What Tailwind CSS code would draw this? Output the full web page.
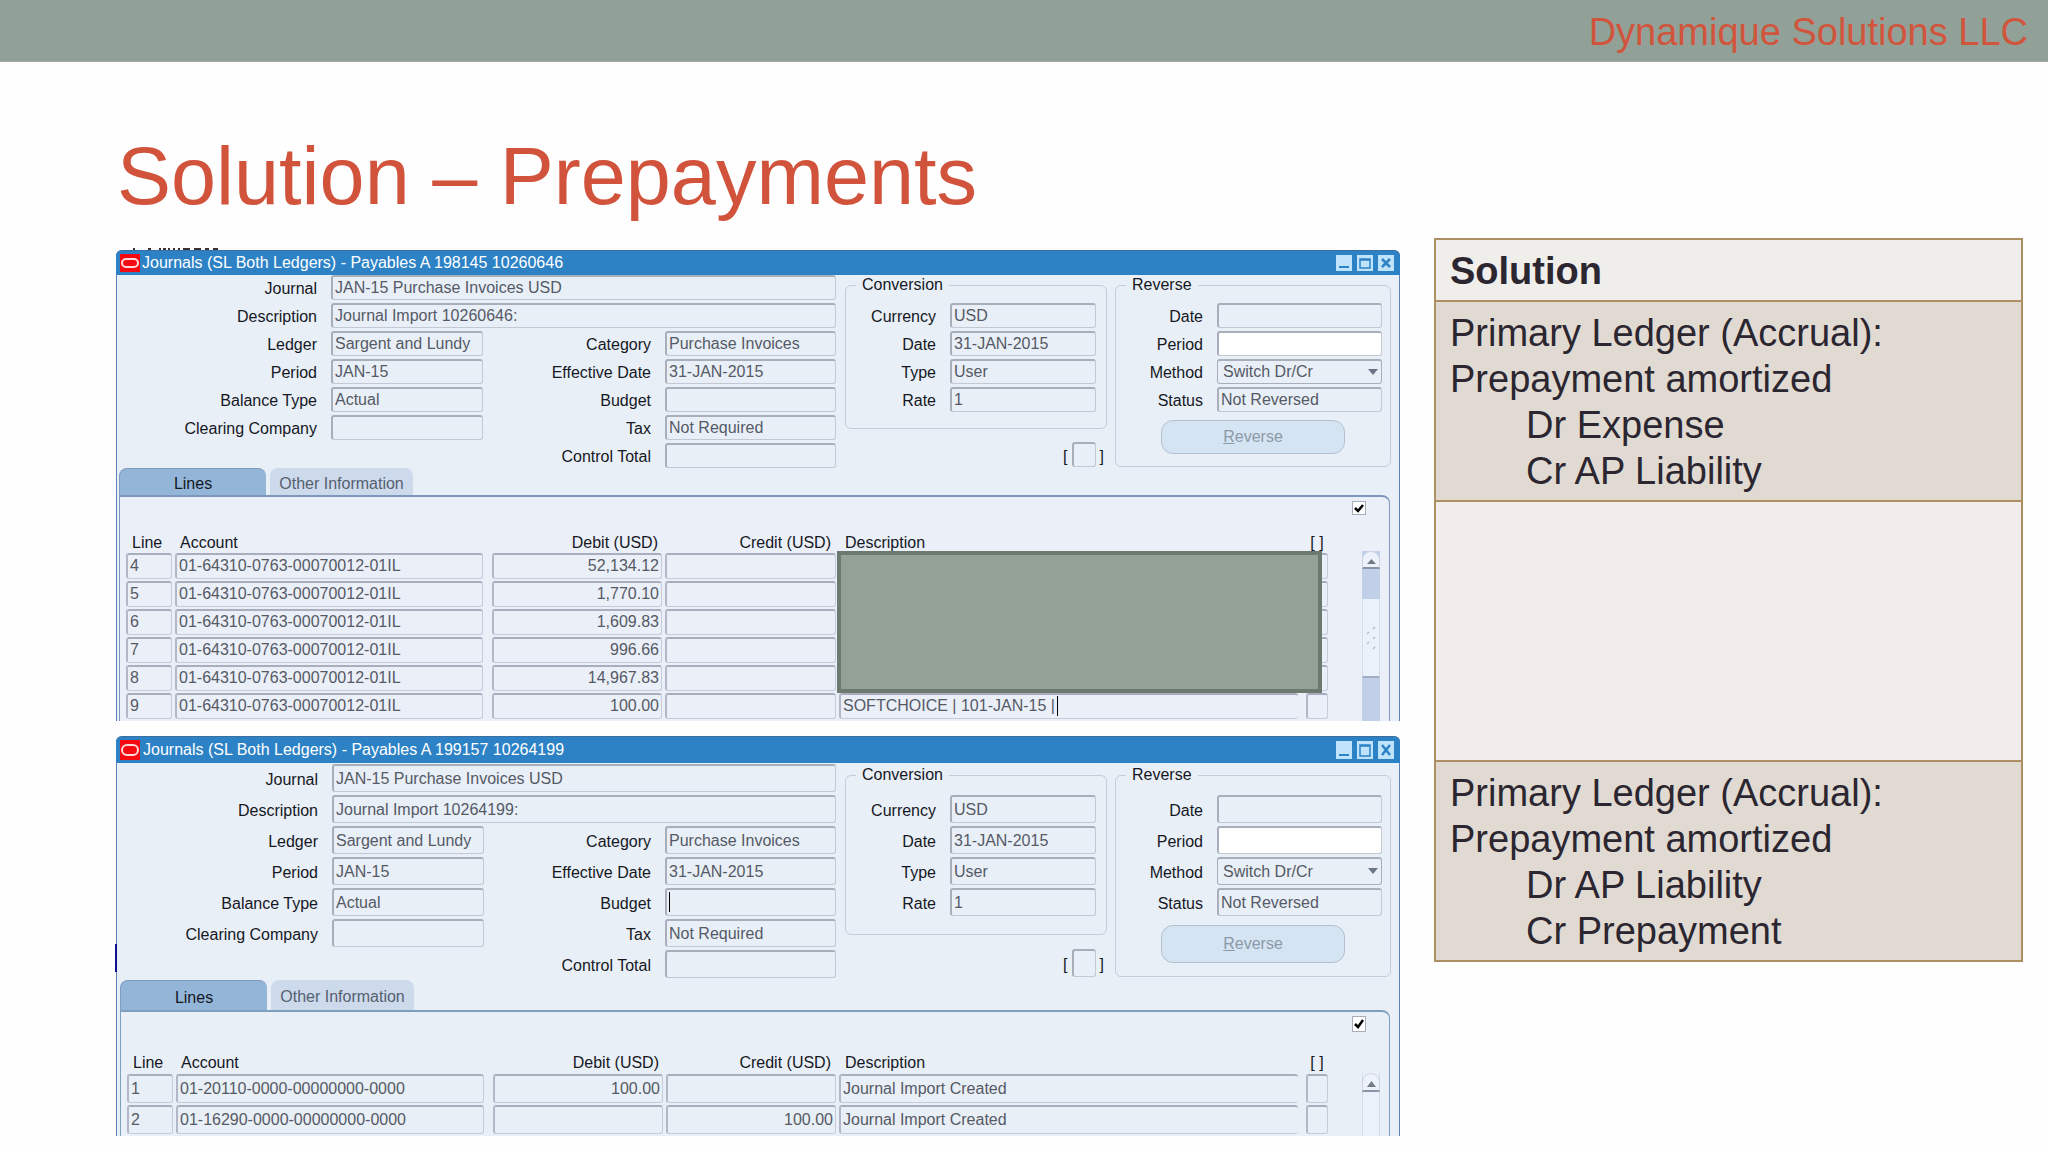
<!DOCTYPE html>
<html lang="en">
<head>
  <meta charset="UTF-8">
  <meta name="viewport" content="width=device-width, initial-scale=1.0">
  <title>Solution – Prepayments</title>
  <script src="https://cdn.jsdelivr.net/npm/@tailwindcss/browser@4"></script>
</head>
<body class="bg-[#fefefe] min-h-screen overflow-x-hidden font-['Liberation_Sans',Arial,sans-serif] text-[#2b2630]">

  <header class="bg-[#91a197] border-b border-[#a3aaa6] h-[62px] flex items-center justify-end pr-5">
    <p class="pt-[2px] text-[38px] leading-none text-[#d1553c]">Dynamique Solutions LLC</p>
  </header>

  <h1 class="pl-[117px] pt-[66px] pb-[14px] text-[81px] leading-[96px] text-[#d1533c]">Solution – Prepayments</h1>

  <main class="grid grid-cols-[1284fr_589fr] gap-[34px] pl-[116px] pr-[25px] items-start">

    <div class="pt-[10px] text-base leading-none">

      <!-- bottom edge of the heading behind the first window -->
      <svg class="block w-full h-[2px]" aria-hidden="true"><path d="M17 1h2M32 1h3M43 1h2M47 1h3M52 1h2M57 1h2M62 1h2M67 1h7M78 1h7M89 1h4M97 1h5" stroke="#333" stroke-width="2"/></svg>

      <!-- Journal 198145 -->
      <section class="bg-[#e9eff7] border-x border-[#5b80b5] rounded-t-md">
        <div class="-mx-px h-[25px] flex items-center gap-[2px] bg-[#2d82c6] border-t border-[#3b6f9f] rounded-t-md pl-1 pr-[6px]">
          <svg class="w-5 h-[18px]" viewBox="0 0 20 18" aria-hidden="true"><rect width="20" height="18" fill="#f50a14"/><rect x="2" y="5" width="16" height="8" rx="4" fill="none" stroke="#ffd9d9" stroke-width="2"/></svg>
          <h2 class="flex-1 text-white">Journals (SL Both Ledgers) - Payables A 198145 10260646</h2>
          <div class="flex gap-[5px]">
            <button aria-label="Minimize"><svg class="block w-4 h-4" viewBox="0 0 16 16"><rect width="16" height="16" fill="#bfe3fa"/><path d="M3 12h10" stroke="#2d82c6" stroke-width="2"/></svg></button>
            <button aria-label="Maximize"><svg class="block w-4 h-4" viewBox="0 0 16 16"><rect width="16" height="16" fill="#bfe3fa"/><path d="M3 4h10v9H3zM3 5h10" fill="none" stroke="#2d82c6" stroke-width="1.5"/></svg></button>
            <button aria-label="Close"><svg class="block w-4 h-4" viewBox="0 0 16 16"><rect width="16" height="16" fill="#bfe3fa"/><path d="M4 4l8 8M12 4l-8 8" stroke="#2d82c6" stroke-width="2.5"/></svg></button>
          </div>
        </div>

        <form class="flex items-start text-[#15181f] [&_label]:pt-[3px] [&_label]:text-right [&_input]:w-full [&_input]:min-w-0 [&_input]:h-full [&_input]:pl-[2px] [&_input]:text-[#555a66] [&_input]:border [&_input]:border-t-2 [&_input]:border-l-2 [&_input]:border-[#c3c8d4] [&_input]:border-t-[#a9aebb] [&_input]:border-l-[#a9aebb] [&_input]:rounded-[3px]">
          <div class="flex-1 grid grid-cols-[200px_152px_1fr_171px] gap-x-[14px] auto-rows-[25px] gap-y-[3px] items-center">
            <label for="a-journal">Journal</label>
            <div class="col-span-3 h-full"><input id="a-journal" value="JAN-15 Purchase Invoices USD" readonly></div>
            <label for="a-desc">Description</label>
            <div class="col-span-3 h-full"><input id="a-desc" value="Journal Import 10260646:" readonly></div>
            <label for="a-ledger">Ledger</label><input id="a-ledger" value="Sargent and Lundy" readonly>
            <label for="a-category">Category</label><input id="a-category" value="Purchase Invoices" readonly>
            <label for="a-period">Period</label><input id="a-period" value="JAN-15" readonly>
            <label for="a-effective">Effective Date</label><input id="a-effective" value="31-JAN-2015" readonly>
            <label for="a-balance">Balance Type</label><input id="a-balance" value="Actual" readonly>
            <label for="a-budget">Budget</label><input id="a-budget" readonly>
            <label for="a-clearing">Clearing Company</label><input id="a-clearing" readonly>
            <label for="a-tax">Tax</label><input id="a-tax" value="Not Required" readonly>
            <label for="a-control" class="col-start-3">Control Total</label><input id="a-control" readonly>
          </div>

          <div class="w-[262px] ml-[9px]">
            <fieldset class="border border-[#c6ccd9] rounded-md pb-4">
              <legend class="ml-[10px] px-[6px] h-5 leading-5">Conversion</legend>
              <div class="mt-2 grid grid-cols-[90px_146px] gap-x-[14px] auto-rows-[25px] gap-y-[3px] items-center">
                <label for="a-currency">Currency</label><input id="a-currency" value="USD" readonly>
                <label for="a-cdate">Date</label><input id="a-cdate" value="31-JAN-2015" readonly>
                <label for="a-type">Type</label><input id="a-type" value="User" readonly>
                <label for="a-rate">Rate</label><input id="a-rate" value="1" readonly>
              </div>
            </fieldset>
            <div class="mt-[13px] pr-[3px] h-[25px] flex items-center justify-end gap-1">
              <span class="pt-1">[</span>
              <div class="w-6 h-full"><input aria-label="Journal flexfield" readonly></div>
              <span class="pt-1">]</span>
            </div>
          </div>

          <fieldset class="w-[276px] ml-2 mr-2 border border-[#c6ccd9] rounded-md pb-3">
            <legend class="ml-[10px] px-[6px] h-5 leading-5">Reverse</legend>
            <div class="mt-2 pr-2 grid grid-cols-[87px_1fr] gap-x-[14px] auto-rows-[25px] gap-y-[3px] items-center">
              <label for="a-rdate">Date</label><input id="a-rdate" readonly>
              <label for="a-rperiod">Period</label><input id="a-rperiod" class="bg-white">
              <label for="a-method">Method</label>
              <div class="relative h-full">
                <select id="a-method" class="appearance-none w-full h-full pl-[5px] text-[#555a66] border border-t-2 border-[#a9aebb] rounded-[3px]"><option>Switch Dr/Cr</option></select>
                <svg class="absolute right-1 top-[10px] w-[10px] h-[6px]" viewBox="0 0 10 6" aria-hidden="true"><path d="M0 0h10L5 6z" fill="#6b7688"/></svg>
              </div>
              <label for="a-status">Status</label><input id="a-status" value="Not Reversed" readonly>
            </div>
            <button type="button" class="block mt-2 ml-[45px] w-[184px] h-[34px] rounded-xl border border-[#b3c0d0] bg-[#d5e4f2] text-[#8d99a8]"><u>R</u>everse</button>
          </fieldset>
        </form>

        <nav class="flex gap-1 pl-[2px] h-[27px]">
          <button class="w-[147px] pt-1 bg-[#93b5d7] border-t border-l border-[#7d9cbf] rounded-t-lg text-[#15181f]">Lines</button>
          <button class="w-[143px] pt-1 bg-[#cddaec] rounded-t-lg text-[#555f70]">Other Information</button>
        </nav>
        <div class="ml-[2px] mr-[9px] border-x border-t-2 border-[#7f97bf] rounded-tr-lg bg-[#ebeff8]">
          <div class="h-9 pt-1 pr-[23px] flex justify-end">
            <label class="relative block w-[14px] h-[14px]">
              <input type="checkbox" checked aria-label="Enabled" class="block appearance-none w-full h-full bg-white border border-[#a9aebb]">
              <svg class="absolute inset-0 w-full h-full" viewBox="0 0 14 14" aria-hidden="true"><path d="M3 7l3 3 5-6" fill="none" stroke="#000" stroke-width="2.5"/></svg>
            </label>
          </div>
          <div class="relative flex gap-[34px] pl-[6px] pr-[9px]">
            <table class="flex-1 table-fixed [&_th]:font-normal [&_th]:pt-0 [&_th]:pb-[1px] [&_th]:h-5 [&_th]:text-[#15181f] [&_td]:p-0 [&_td]:pb-[2px] [&_input]:block [&_input]:w-full [&_input]:h-[26px] [&_input]:px-[2px] [&_input]:pb-[2px] [&_input]:text-[#555a66] [&_input]:border [&_input]:border-t-2 [&_input]:border-l-2 [&_input]:border-[#c6cbdc] [&_input]:border-t-[#a9aebf] [&_input]:border-l-[#b3b8c8] [&_input]:rounded-[3px]">
              <thead>
                <tr>
                  <th class="w-[49px] text-left"><span class="pl-[6px]">Line</span></th>
                  <th class="w-[317px] text-left"><span class="pl-[5px]">Account</span></th>
                  <th class="w-[173px] text-right"><span class="pr-[7px]">Debit (USD)</span></th>
                  <th class="w-[174px] text-right"><span class="pr-2">Credit (USD)</span></th>
                  <th class="text-left"><span class="pl-[6px]">Description</span></th>
                  <th class="w-[22px]">[ ]</th>
                </tr>
              </thead>
              <tbody class="[&_td:nth-child(1)]:pr-[3px] [&_td:nth-child(2)]:pr-[9px] [&_td:nth-child(3)]:pr-[3px] [&_td:nth-child(4)]:pr-[3px] [&_td:nth-child(5)]:pr-2 [&_td:nth-child(3)_input]:text-right [&_td:nth-child(4)_input]:text-right [&_td:nth-child(5)_input]:border-r-0">
                <tr><td><input aria-label="Line" value="4"></td><td><input aria-label="Account" value="01-64310-0763-00070012-01IL"></td><td><input aria-label="Debit" value="52,134.12"></td><td><input aria-label="Credit"></td><td><input aria-label="Description"></td><td><input aria-label="Flexfield"></td></tr>
                <tr><td><input aria-label="Line" value="5"></td><td><input aria-label="Account" value="01-64310-0763-00070012-01IL"></td><td><input aria-label="Debit" value="1,770.10"></td><td><input aria-label="Credit"></td><td><input aria-label="Description"></td><td><input aria-label="Flexfield"></td></tr>
                <tr><td><input aria-label="Line" value="6"></td><td><input aria-label="Account" value="01-64310-0763-00070012-01IL"></td><td><input aria-label="Debit" value="1,609.83"></td><td><input aria-label="Credit"></td><td><input aria-label="Description"></td><td><input aria-label="Flexfield"></td></tr>
                <tr><td><input aria-label="Line" value="7"></td><td><input aria-label="Account" value="01-64310-0763-00070012-01IL"></td><td><input aria-label="Debit" value="996.66"></td><td><input aria-label="Credit"></td><td><input aria-label="Description"></td><td><input aria-label="Flexfield"></td></tr>
                <tr><td><input aria-label="Line" value="8"></td><td><input aria-label="Account" value="01-64310-0763-00070012-01IL"></td><td><input aria-label="Debit" value="14,967.83"></td><td><input aria-label="Credit"></td><td><input aria-label="Description"></td><td><input aria-label="Flexfield"></td></tr>
                <tr><td><input aria-label="Line" value="9"></td><td><input aria-label="Account" value="01-64310-0763-00070012-01IL"></td><td><input aria-label="Debit" value="100.00"></td><td><input aria-label="Credit"></td><td class="relative"><input aria-label="Description" value="SOFTCHOICE | 101-JAN-15 |"><span class="absolute left-[218px] top-[3px] w-px h-5 bg-black"></span></td><td><input aria-label="Flexfield"></td></tr>
              </tbody>
            </table>
            <div class="w-[18px] mt-[18px] flex flex-col bg-[#c1d0e8]">
              <button aria-label="Scroll up" class="h-[18px] flex items-center justify-center bg-[#edf2fa] border border-[#ccd4e2] border-b-2 border-b-[#8a94a6] rounded-t-full"><svg class="w-[9px] h-[5px] mt-1" viewBox="0 0 9 5"><path d="M0 5h9L4.5 0z" fill="#747b88"/></svg></button>
              <div class="mt-[30px] h-[79px] bg-[#ebf1fa] border-x border-b-2 border-[#d3dcea] border-b-[#a3aec2] flex items-center justify-center"><svg class="w-3 h-6" viewBox="0 0 12 24" aria-hidden="true"><path d="M8 3l2-2M2 8l2-2M8 13l2-2M2 18l2-2M8 23l2-2" stroke="#b5bfd0" stroke-width="1.5"/></svg></div>
            </div>
            <div class="absolute top-[18px] left-[717px] right-[67px] h-[142px] bg-[#94a197] border-4 border-[#6b796f]"></div>
          </div>
        </div>
      </section>

      <!-- Journal 199157 -->
      <section class="relative mt-[15px] bg-[#e9eff7] border-x border-[#5b80b5] rounded-t-md">
        <span class="absolute -left-[2px] top-[208px] w-[2px] h-7 bg-[#10108c]"></span>
        <div class="-mx-px h-[27px] flex items-center gap-[3px] bg-[#2d82c6] border-t border-[#3b6f9f] rounded-t-md pl-1 pr-[6px]">
          <svg class="w-5 h-5" viewBox="0 0 20 20" aria-hidden="true"><rect width="20" height="20" fill="#f50a14"/><rect x="2" y="5" width="16" height="10" rx="5" fill="none" stroke="#ffd9d9" stroke-width="2"/></svg>
          <h2 class="flex-1 text-white">Journals (SL Both Ledgers) - Payables A 199157 10264199</h2>
          <div class="flex gap-[5px]">
            <button aria-label="Minimize"><svg class="block w-4 h-[18px]" viewBox="0 0 16 18"><rect width="16" height="18" fill="#bfe3fa"/><path d="M3 14h10" stroke="#2d82c6" stroke-width="2"/></svg></button>
            <button aria-label="Maximize"><svg class="block w-4 h-[18px]" viewBox="0 0 16 18"><rect width="16" height="18" fill="#bfe3fa"/><path d="M3 4h10v11H3zM3 5h10" fill="none" stroke="#2d82c6" stroke-width="1.5"/></svg></button>
            <button aria-label="Close"><svg class="block w-4 h-[18px]" viewBox="0 0 16 18"><rect width="16" height="18" fill="#bfe3fa"/><path d="M4 4l8 10M12 4l-8 10" stroke="#2d82c6" stroke-width="2.5"/></svg></button>
          </div>
        </div>

        <form class="pt-px flex items-start text-[#15181f] [&_label]:pt-1 [&_label]:text-right [&_input]:w-full [&_input]:min-w-0 [&_input]:h-full [&_input]:pl-[2px] [&_input]:text-[#555a66] [&_input]:border [&_input]:border-t-2 [&_input]:border-l-2 [&_input]:border-[#c3c8d4] [&_input]:border-t-[#a9aebb] [&_input]:border-l-[#a9aebb] [&_input]:rounded-[3px]">
          <div class="flex-1 grid grid-cols-[201px_152px_1fr_171px] gap-x-[14px] auto-rows-[28px] gap-y-[3px] items-center">
            <label for="b-journal">Journal</label>
            <div class="col-span-3 h-full"><input id="b-journal" value="JAN-15 Purchase Invoices USD" readonly></div>
            <label for="b-desc">Description</label>
            <div class="col-span-3 h-full"><input id="b-desc" value="Journal Import 10264199:" readonly></div>
            <label for="b-ledger">Ledger</label><input id="b-ledger" value="Sargent and Lundy" readonly>
            <label for="b-category">Category</label><input id="b-category" value="Purchase Invoices" readonly>
            <label for="b-period">Period</label><input id="b-period" value="JAN-15" readonly>
            <label for="b-effective">Effective Date</label><input id="b-effective" value="31-JAN-2015" readonly>
            <label for="b-balance">Balance Type</label><input id="b-balance" value="Actual" readonly>
            <label for="b-budget">Budget</label>
            <div class="relative h-full"><input id="b-budget"><span class="absolute left-1 top-1 w-px h-5 bg-black"></span></div>
            <label for="b-clearing">Clearing Company</label><input id="b-clearing" readonly>
            <label for="b-tax">Tax</label><input id="b-tax" value="Not Required" readonly>
            <label for="b-control" class="col-start-3">Control Total</label><input id="b-control" readonly>
          </div>

          <div class="w-[262px] ml-[9px]">
            <fieldset class="border border-[#c6ccd9] rounded-md pb-[18px]">
              <legend class="ml-[10px] px-[6px] h-[22px] leading-[22px]">Conversion</legend>
              <div class="mt-[9px] grid grid-cols-[90px_146px] gap-x-[14px] auto-rows-[28px] gap-y-[3px] items-center">
                <label for="b-currency">Currency</label><input id="b-currency" value="USD" readonly>
                <label for="b-cdate">Date</label><input id="b-cdate" value="31-JAN-2015" readonly>
                <label for="b-type">Type</label><input id="b-type" value="User" readonly>
                <label for="b-rate">Rate</label><input id="b-rate" value="1" readonly>
              </div>
            </fieldset>
            <div class="mt-[14px] pr-[3px] h-7 flex items-center justify-end gap-1">
              <span class="pt-1">[</span>
              <div class="w-6 h-full"><input aria-label="Journal flexfield" readonly></div>
              <span class="pt-1">]</span>
            </div>
          </div>

          <fieldset class="w-[276px] ml-2 mr-2 border border-[#c6ccd9] rounded-md pb-[13px]">
            <legend class="ml-[10px] px-[6px] h-[22px] leading-[22px]">Reverse</legend>
            <div class="mt-[9px] pr-2 grid grid-cols-[87px_1fr] gap-x-[14px] auto-rows-[28px] gap-y-[3px] items-center">
              <label for="b-rdate">Date</label><input id="b-rdate" readonly>
              <label for="b-rperiod">Period</label><input id="b-rperiod" class="bg-white">
              <label for="b-method">Method</label>
              <div class="relative h-full">
                <select id="b-method" class="appearance-none w-full h-full pl-[5px] text-[#555a66] border border-t-2 border-[#a9aebb] rounded-[3px]"><option>Switch Dr/Cr</option></select>
                <svg class="absolute right-1 top-[11px] w-[10px] h-[6px]" viewBox="0 0 10 6" aria-hidden="true"><path d="M0 0h10L5 6z" fill="#6b7688"/></svg>
              </div>
              <label for="b-status">Status</label><input id="b-status" value="Not Reversed" readonly>
            </div>
            <button type="button" class="block mt-[9px] ml-[45px] w-[184px] h-[38px] rounded-xl border border-[#b3c0d0] bg-[#d5e4f2] text-[#8d99a8]"><u>R</u>everse</button>
          </fieldset>
        </form>

        <nav class="flex gap-1 mt-[2px] pl-[3px] h-[30px]">
          <button class="w-[147px] pt-1 bg-[#93b5d7] border-t border-l border-[#7d9cbf] rounded-t-lg text-[#15181f]">Lines</button>
          <button class="w-[143px] pt-1 bg-[#cddaec] rounded-t-lg text-[#555f70]">Other Information</button>
        </nav>
        <div class="ml-[3px] mr-[9px] border-x border-t-2 border-[#7f9fbf] rounded-tr-lg bg-[#e9eff6]">
          <div class="h-10 pt-1 pr-[23px] flex justify-end">
            <label class="relative block w-[14px] h-4">
              <input type="checkbox" checked aria-label="Enabled" class="block appearance-none w-full h-full bg-white border border-[#a9aebb]">
              <svg class="absolute inset-0 w-full h-full" viewBox="0 0 14 16" aria-hidden="true"><path d="M3 8l3 3 5-7" fill="none" stroke="#000" stroke-width="2.5"/></svg>
            </label>
          </div>
          <div class="flex gap-[34px] pl-[6px] pr-[9px]">
            <table class="flex-1 table-fixed [&_th]:font-normal [&_th]:pt-0 [&_th]:pb-[1px] [&_th]:h-[22px] [&_th]:text-[#15181f] [&_td]:p-0 [&_td]:pb-[2px] [&_input]:block [&_input]:w-full [&_input]:h-[29px] [&_input]:px-[2px] [&_input]:text-[#555a66] [&_input]:border [&_input]:border-t-2 [&_input]:border-l-2 [&_input]:border-[#c6cbdc] [&_input]:border-t-[#a9aebf] [&_input]:border-l-[#b3b8c8] [&_input]:rounded-[3px]">
              <thead>
                <tr>
                  <th class="w-[49px] text-left"><span class="pl-[6px]">Line</span></th>
                  <th class="w-[317px] text-left"><span class="pl-[5px]">Account</span></th>
                  <th class="w-[173px] text-right"><span class="pr-[7px]">Debit (USD)</span></th>
                  <th class="w-[173px] text-right"><span class="pr-2">Credit (USD)</span></th>
                  <th class="text-left"><span class="pl-[6px]">Description</span></th>
                  <th class="w-[22px]">[ ]</th>
                </tr>
              </thead>
              <tbody class="[&_td:nth-child(1)]:pr-[3px] [&_td:nth-child(2)]:pr-[9px] [&_td:nth-child(3)]:pr-[3px] [&_td:nth-child(4)]:pr-[3px] [&_td:nth-child(5)]:pr-2 [&_td:nth-child(3)_input]:text-right [&_td:nth-child(4)_input]:text-right [&_td:nth-child(5)_input]:border-r-0">
                <tr><td><input aria-label="Line" value="1"></td><td><input aria-label="Account" value="01-20110-0000-00000000-0000"></td><td><input aria-label="Debit" value="100.00"></td><td><input aria-label="Credit"></td><td><input aria-label="Description" value="Journal Import Created"></td><td><input aria-label="Flexfield"></td></tr>
                <tr><td><input aria-label="Line" value="2"></td><td><input aria-label="Account" value="01-16290-0000-00000000-0000"></td><td><input aria-label="Debit"></td><td><input aria-label="Credit" value="100.00"></td><td><input aria-label="Description" value="Journal Import Created"></td><td><input aria-label="Flexfield"></td></tr>
              </tbody>
            </table>
            <div class="w-[18px] mt-[21px] flex flex-col bg-[#ebf1fa] border-x border-[#d3dcea]">
              <button aria-label="Scroll up" class="-mx-px h-[19px] flex items-center justify-center bg-[#edf2fa] border border-[#ccd4e2] border-b-2 border-b-[#8a94a6] rounded-t-full"><svg class="w-[9px] h-[6px] mt-1" viewBox="0 0 9 6"><path d="M0 6h9L4.5 0z" fill="#747b88"/></svg></button>
            </div>
          </div>
        </div>
      </section>
    </div>

    <table class="w-full border-collapse text-[38px] leading-[46px] [&_th]:border-2 [&_td]:border-2 [&_th]:border-[#ac8f63] [&_td]:border-[#ac8f63] [&_th]:px-[14px] [&_td]:px-[14px] [&_td]:align-top">
      <thead>
        <tr><th class="h-[62px] pt-[2px] pb-0 text-left bg-[#f0eeeb]">Solution</th></tr>
      </thead>
      <tbody>
        <tr>
          <td class="pt-2 pb-[6px] bg-[#e1dad3]">
            <p>Primary Ledger (Accrual):</p>
            <p>Prepayment amortized</p>
            <p class="pl-[76px]">Dr Expense</p>
            <p class="pl-[76px]">Cr AP Liability</p>
          </td>
        </tr>
        <tr><td class="h-[260px] bg-[#f2edeb]"></td></tr>
        <tr>
          <td class="pt-2 pb-[6px] bg-[#e1dad3]">
            <p>Primary Ledger (Accrual):</p>
            <p>Prepayment amortized</p>
            <p class="pl-[76px]">Dr AP Liability</p>
            <p class="pl-[76px]">Cr Prepayment</p>
          </td>
        </tr>
      </tbody>
    </table>
  </main>
</body>
</html>
